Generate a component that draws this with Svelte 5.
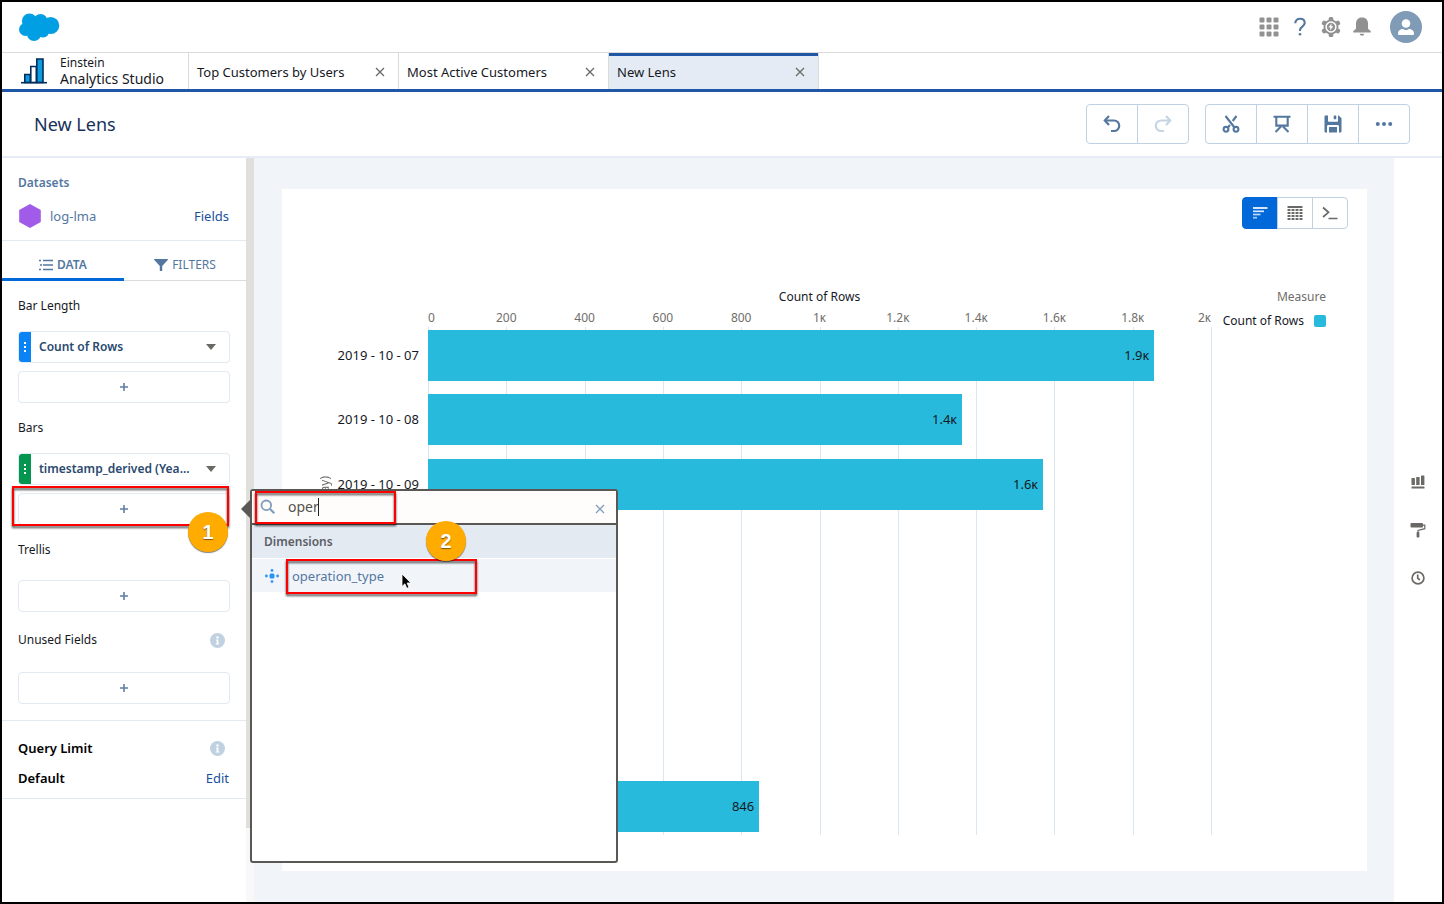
<script>
  let query = $state('oper');

  const tabs = [
    { title: 'Top Customers by Users' },
    { title: 'Most Active Customers' },
    { title: 'New Lens', active: true }
  ];

  const axisMax = 2000;
  const ticks = ['0', '200', '400', '600', '800', '1ᴋ', '1.2ᴋ', '1.4ᴋ', '1.6ᴋ', '1.8ᴋ', '2ᴋ'];

  const rows = [
    { date: '2019 - 10 - 07', value: 1855, label: '1.9ᴋ' },
    { date: '2019 - 10 - 08', value: 1364, label: '1.4ᴋ' },
    { date: '2019 - 10 - 09', value: 1571, label: '1.6ᴋ' },
    { date: '2019 - 10 - 10', value: 0, label: '' },
    { date: '2019 - 10 - 11', value: 0, label: '' },
    { date: '2019 - 10 - 12', value: 0, label: '' },
    { date: '2019 - 10 - 13', value: 0, label: '' },
    { date: '2019 - 10 - 14', value: 846, label: '846' }
  ];

  const fields = ['operation_type'];
  const matches = $derived(fields.filter((f) => f.includes(query)));

  const pct = (n) => (n / axisMax) * 100;
</script>

{#snippet plus()}
  <svg width="10" height="10" viewBox="0 0 10 10" aria-hidden="true">
    <path d="M5 1v8M1 5h8" stroke="#5f7fa5" stroke-width="1.6" />
  </svg>
{/snippet}

{#snippet cross(color)}
  <svg width="10" height="10" viewBox="0 0 10 10" aria-hidden="true">
    <path d="M1 1l8 8M9 1l-8 8" stroke={color} stroke-width="1.3" />
  </svg>
{/snippet}

{#snippet info()}
  <svg width="15" height="15" viewBox="0 0 15 15" aria-hidden="true">
    <circle cx="7.5" cy="7.5" r="7.5" fill="#c0d1e1" />
    <circle cx="7.5" cy="4.4" r="1.2" fill="#fff" />
    <path d="M6 6.5h2.4v4h.9v1H5.8v-1h.9v-3H6z" fill="#fff" />
  </svg>
{/snippet}

{#snippet pill(text, kind)}
  <button class="pill">
    <span class="grip {kind}"><i></i><i></i><i></i></span>
    <span class="pill-text">{text}</span>
    <svg width="10" height="6" viewBox="0 0 10 6" aria-hidden="true"><path d="M0 0h10L5 6z" fill="#6b6965" /></svg>
  </button>
{/snippet}

<div class="app">
  <header class="topbar">
    <a href="#home" aria-label="Home">
      <svg width="41" height="29" viewBox="0 0 41 29" fill="#009fe3">
        <circle cx="10.5" cy="8" r="7.6" />
        <circle cx="21.5" cy="8" r="7" />
        <circle cx="31.7" cy="12.5" r="8.6" />
        <circle cx="6.5" cy="16.5" r="6.5" />
        <circle cx="15" cy="21" r="7" />
        <circle cx="24" cy="18" r="6.5" />
        <circle cx="16" cy="13" r="8" />
      </svg>
    </a>
    <nav class="utilities">
      <button aria-label="App launcher">
        <svg width="20" height="20" viewBox="0 0 20 20" fill="#919191">
          {#each [0, 7, 14] as y}
            {#each [0, 7, 14] as x}
              <rect x={x + 0.5} y={y + 0.5} width="5" height="5" rx="1" />
            {/each}
          {/each}
        </svg>
      </button>
      <button aria-label="Help">
        <svg width="20" height="20" viewBox="0 0 20 20" fill="none">
          <path d="M5.3 6.200C5.3 3.4 7.3 1.800 10 1.800s4.700 1.600 4.700 4.200c0 3.600-4.700 3.700-4.700 7.200v.7" stroke="#54779f" stroke-width="2.100" />
          <circle cx="10" cy="17.200" r="1.300" fill="#54779f" />
        </svg>
      </button>
      <button aria-label="Setup">
        <svg width="20" height="20" viewBox="0 0 20 20">
          <g fill="#919191">
            <circle cx="10" cy="10" r="7.500" />
            {#each [0, 60, 120] as a}
              <rect x="7.700" y="0" width="4.600" height="20" rx="1.500" transform="rotate({a} 10 10)" />
            {/each}
          </g>
          <circle cx="10" cy="10" r="4.900" fill="none" stroke="#fff" stroke-width="1.500" />
          <path d="M10.600 6.300L7.500 10.500h2L8.900 13.700l3.400-4.400h-2z" fill="#fff" />
        </svg>
      </button>
      <button aria-label="Notifications">
        <svg width="20" height="20" viewBox="0 0 20 20" fill="#919191">
          <path d="M10 .5c-4 0-6 2.700-6 6v4.800c0 1.300-2.900 2-2.900 3.400 0 .6.400.9.900.9h16c.5 0 .9-.3.900-.9 0-1.400-2.900-2.100-2.900-3.400V6.500c0-3.300-2-6-6-6z" />
          <path d="M7.800 16.800h4.400c0 1.200-1 2-2.200 2s-2.200-.8-2.200-2z" />
        </svg>
      </button>
      <button class="avatar" aria-label="Profile">
        <svg width="32" height="32" viewBox="0 0 32 32">
          <circle cx="16" cy="16" r="16" fill="#7f9bb6" />
          <circle cx="16" cy="12.500" r="4.300" fill="#fff" />
          <path d="M8 22.500c0-3 2.400-4.500 5-4.500 1.700 1.500 4.300 1.500 6 0 2.600 0 5 1.500 5 4.500 0 1-.6 1.500-1.500 1.500h-13c-.9 0-1.500-.5-1.500-1.500z" fill="#fff" />
        </svg>
      </button>
    </nav>
  </header>

  <div class="tabbar">
    <div class="brand">
      <svg width="26" height="26" viewBox="0 0 26 26" stroke="#032d60" stroke-width="1.600">
        <path d="M3.800 24.500v-8h5.500v8z" fill="#0d9dda" />
        <path d="M9.800 24.500V8.500h5.500v16z" fill="#fff" />
        <path d="M15.800 24.500V1h6.200v23.500z" fill="#0d9dda" />
        <path d="M0 24.700h26" />
      </svg>
      <div class="brand-name">
        <span>Einstein</span>
        <strong>Analytics Studio</strong>
      </div>
    </div>
    {#each tabs as tab}
      <div class="tab" class:active={tab.active}>
        <a href="#tab">{tab.title}</a>
        <button aria-label="Close {tab.title}">{@render cross('#6b6965')}</button>
      </div>
    {/each}
  </div>

  <div class="toolbar">
    <h1>New Lens</h1>
    <div class="group">
      <button aria-label="Undo">
        <svg width="18" height="18" viewBox="0 0 18 18" fill="none" stroke="#54779f" stroke-width="2.200">
          <path d="M2 5.500h9a5.200 5.200 0 0 1 0 10.500H8" />
          <path d="M6 1L1.800 5.500 6 10" />
        </svg>
      </button>
      <button aria-label="Redo" disabled>
        <svg width="18" height="18" viewBox="0 0 18 18" fill="none" stroke="#c5d5e4" stroke-width="2.200">
          <path d="M16 5.500H7A5.200 5.200 0 0 0 7 16h3" />
          <path d="M12 1l4.200 4.500L12 10" />
        </svg>
      </button>
    </div>
    <div class="group">
      <button aria-label="Clip">
        <svg width="18" height="18" viewBox="0 0 18 18" fill="none" stroke="#54779f" stroke-width="2.100">
          <path d="M3.500 1l9 11.500M14.500 1l-3.800 5M8 10l-2.500 3" />
          <circle cx="4" cy="14.300" r="2.400" />
          <circle cx="14" cy="14.300" r="2.400" />
        </svg>
      </button>
      <button aria-label="Present">
        <svg width="18" height="18" viewBox="0 0 18 18" fill="none" stroke="#54779f" stroke-width="2.100">
          <path d="M.5 1.700h17M3.300 2v8.600h11.400V2M8 11.500L2.500 17M10 11.500l5.500 5.500" />
        </svg>
      </button>
      <button aria-label="Save">
        <svg width="18" height="18" viewBox="0 0 18 18" fill="#54779f">
          <path d="M1.500.5H4v5.300c0 .6.400 1 1 1h8c.6 0 1-.4 1-1V.5h.8l2.700 2.700v13c0 .7-.5 1.300-1.300 1.300H15v-6c0-.9-.6-1.500-1.500-1.500h-9C3.600 10 3 10.600 3 11.500v6H1.800C1 17.500.5 17 .5 16.200V1.500c0-.6.400-1 1-1z" />
          <rect x="9.700" y=".5" width="2.600" height="3.800" rx=".6" />
          <path d="M5 12h8v5.500H5z" />
        </svg>
      </button>
      <button aria-label="More">
        <svg width="18" height="18" viewBox="0 0 18 18" fill="#54779f">
          <circle cx="2.800" cy="9" r="2" />
          <circle cx="9" cy="9" r="2" />
          <circle cx="15.200" cy="9" r="2" />
        </svg>
      </button>
    </div>
  </div>

  <div class="body">
    <aside class="sidebar">
      <section class="datasets">
        <h2>Datasets</h2>
        <div class="line">
          <svg width="24" height="24" viewBox="0 0 24 24" aria-hidden="true">
            <path d="M12 0l10.800 6v12L12 24 1.200 18V6z" fill="#a05ce8" />
          </svg>
          <span class="dataset">log-lma</span>
          <a href="#fields">Fields</a>
        </div>
      </section>

      <nav class="modes">
        <button class="on">
          <svg width="14" height="12" viewBox="0 0 14 12" stroke="#54779f" stroke-width="1.500" aria-hidden="true">
            <path d="M4 1.500h10M4 6h10M4 10.500h10M0 1.500h2M1 6h2M0 10.500h2" />
          </svg>
          DATA
        </button>
        <button>
          <svg width="14" height="12" viewBox="0 0 14 12" fill="#54779f" aria-hidden="true">
            <path d="M.5 0h13c.5 0 .5.600.2 1L8.200 7v5H5.800V7L.3 1C0 .6 0 0 .5 0z" />
          </svg>
          FILTERS
        </button>
      </nav>

      <div class="builder">
        <section>
          <h3>Bar Length</h3>
          {@render pill('Count of Rows', 'measure')}
          <button class="add" aria-label="Add bar length">{@render plus()}</button>
        </section>

        <section>
          <h3>Bars</h3>
          {@render pill('timestamp_derived (Yea...', 'dimension')}
          <div class="anchor">
            <button class="add" aria-label="Add bars grouping">{@render plus()}</button>
            <div class="callout callout-add"></div>
            <span class="step step-one">1</span>

            <div class="popover">
              <div class="search">
                <svg width="16" height="16" viewBox="0 0 16 16" fill="none" stroke="#7f9bbd" aria-hidden="true">
                  <circle cx="6.300" cy="6.300" r="4.800" stroke-width="1.800" />
                  <path d="M9.800 9.800l4.500 4.500" stroke-width="2.200" />
                </svg>
                <div class="entry">
                  <input type="text" aria-label="Search fields" bind:value={query} />
                  <span class="caret"></span>
                </div>
                <button class="clear" aria-label="Clear search" onclick={() => (query = '')}>{@render cross('#7f9bbd')}</button>
                <div class="callout callout-search"></div>
              </div>
              <h4>Dimensions</h4>
              {#each matches as field}
                <button class="field">
                  <svg width="14" height="14" viewBox="0 0 14 14" fill="#2a94f4" aria-hidden="true">
                    <rect x="4.500" y="4.500" width="5" height="5" rx="1.500" />
                    <circle cx="7" cy="1.400" r="1.400" />
                    <circle cx="7" cy="12.600" r="1.400" />
                    <circle cx="1.400" cy="7" r="1.400" />
                    <circle cx="12.600" cy="7" r="1.400" />
                  </svg>
                  {field}
                </button>
              {/each}
              <div class="callout callout-field"></div>
              <span class="step step-two">2</span>
              <svg class="pointer" width="11" height="17" viewBox="0 0 11 17" aria-hidden="true">
                <path d="M1 1v12.500l2.900-2.700 1.900 4.500 2.200-.9-1.900-4.400h3.800z" fill="#000" stroke="#fff" stroke-width=".8" />
              </svg>
            </div>
          </div>
        </section>

        <section class="roomy">
          <h3>Trellis</h3>
          <button class="add" aria-label="Add trellis">{@render plus()}</button>
        </section>

        <section class="roomy">
          <h3>Unused Fields {@render info()}</h3>
          <button class="add" aria-label="Add unused field">{@render plus()}</button>
        </section>
      </div>

      <section class="limit">
        <div class="line"><strong>Query Limit</strong>{@render info()}</div>
        <div class="line"><strong>Default</strong><a href="#edit">Edit</a></div>
      </section>
    </aside>

    <div class="scrollbar"><div class="thumb"></div></div>

    <main>
      <div class="card">
        <div class="views">
          <button class="on" aria-label="Chart">
            <svg width="16" height="14" viewBox="0 0 16 14" stroke="#fff" stroke-width="1.700">
              <path d="M1 2h14.500" />
              <path d="M1 5.300h11" opacity=".85" />
              <path d="M1 8.500h7.500" opacity=".75" />
              <path d="M1 11.700h4" opacity=".65" />
            </svg>
          </button>
          <button aria-label="Table">
            <svg width="16" height="16" viewBox="0 0 16 16" fill="#6b6965">
              <rect x=".5" y="1" width="15" height="2" rx=".5" />
              {#each [4, 7, 10, 13] as y}
                {#each [0.5, 4.5, 8.5, 12.5] as x}
                  <rect {x} {y} width="3" height="2" rx=".5" />
                {/each}
              {/each}
            </svg>
          </button>
          <button aria-label="Query">
            <svg width="16" height="14" viewBox="0 0 16 14" fill="none" stroke="#6b6965" stroke-width="1.700">
              <path d="M1 1.500l5.500 4.800L1 11M6.500 12.500h9" />
            </svg>
          </button>
        </div>

        <div class="chart">
          <div class="axis-title">Count of Rows</div>
          <div class="ticks">
            {#each ticks as tick, i}
              <span class:first={i === 0} class:last={i === ticks.length - 1} style="left: {i * 10}%">{tick}</span>
            {/each}
          </div>
          <div class="side">
            <span class="group-title">timestamp_derived (Year-Month-Day)</span>
            <div class="dates">
              {#each rows as row}
                <span>{row.date}</span>
              {/each}
            </div>
          </div>
          <div class="plot">
            {#each ticks as _, i}
              <div class="gridline" style="left: {i * 10}%"></div>
            {/each}
            {#each rows as row}
              <div class="bar" style="width: {pct(row.value)}%">{row.label}</div>
            {/each}
          </div>
          <div class="legend">
            <span>Measure</span>
            <div class="legend-row">Count of Rows <i></i></div>
          </div>
        </div>
      </div>
    </main>

    <nav class="rail">
      <button aria-label="Chart types">
        <svg width="14" height="14" viewBox="0 0 14 14" fill="#6b6965">
          <rect x=".5" y="3" width="3.400" height="7" rx=".6" />
          <rect x="5.200" y="2" width="3.400" height="8" rx=".6" />
          <rect x="10" y=".5" width="3.400" height="9.500" rx=".6" />
          <rect x=".5" y="11.500" width="13" height="2" rx=".6" />
        </svg>
      </button>
      <button aria-label="Formatting">
        <svg width="16" height="16" viewBox="0 0 16 16" fill="#6b6965">
          <rect x=".5" y="1" width="12.500" height="4.500" rx="1" />
          <path d="M13 3.200h1.800v3.500L8 8.500v2" fill="none" stroke="#6b6965" stroke-width="1.200" />
          <rect x="6.600" y="10" width="2.800" height="5.500" rx=".8" />
        </svg>
      </button>
      <button aria-label="History">
        <svg width="14" height="14" viewBox="0 0 14 14" fill="none" stroke="#6b6965" stroke-width="1.700">
          <circle cx="7" cy="7" r="5.900" />
          <path d="M6.700 3.500v3.700L8.800 9" />
        </svg>
      </button>
    </nav>
  </div>
</div>

<style>
  :global(body) {
    margin: 0;
    background: #fff;
  }
  .app {
    display: flex;
    flex-direction: column;
    min-height: 100vh;
    box-sizing: border-box;
    border: 2px solid #000;
    font-family: "Noto Sans", sans-serif;
    font-size: 13px;
    line-height: 20px;
    color: #16191f;
  }
  button {
    display: flex;
    align-items: center;
    justify-content: center;
    padding: 0;
    border: 0;
    background: none;
    font: inherit;
    color: inherit;
    cursor: pointer;
  }
  a {
    color: #1b4f9c;
    text-decoration: none;
  }
  h1, h2, h3, h4 {
    margin: 0;
    font-size: 12px;
    font-weight: 400;
  }
  svg {
    flex-shrink: 0;
    display: block;
  }

  .topbar {
    display: flex;
    align-items: center;
    justify-content: space-between;
    height: 50px;
    padding: 0 20px 0 17px;
    border-bottom: 1px solid #dddbda;
  }
  .utilities {
    display: flex;
    align-items: center;
    gap: 11px;
  }
  .avatar {
    margin-left: 7px;
  }

  .tabbar {
    display: flex;
    height: 36px;
    border-bottom: 3px solid #1f57a6;
  }
  .brand {
    display: flex;
    align-items: center;
    gap: 13px;
    width: 186px;
    box-sizing: border-box;
    padding-left: 19px;
  }
  .brand-name {
    display: flex;
    flex-direction: column;
    font-size: 12px;
    line-height: 16px;
  }
  .brand-name strong {
    font-size: 14px;
    font-weight: 400;
  }
  .tab {
    display: flex;
    align-items: center;
    justify-content: space-between;
    width: 210px;
    box-sizing: border-box;
    padding: 2px 13px 0 8px;
    border-left: 1px solid #dddbda;
  }
  .tab a {
    color: #16191f;
  }
  .tab.active {
    width: 211px;
    border-right: 1px solid #dddbda;
    background: #e4ebf4;
    box-shadow: inset 0 3px #1f57a6;
  }

  .toolbar {
    display: flex;
    align-items: center;
    gap: 16px;
    height: 64px;
    padding: 0 32px;
    border-bottom: 2px solid #e6ecf5;
  }
  .toolbar h1 {
    flex: 1;
    font-size: 18px;
    color: #16325c;
  }
  .group, .views {
    display: flex;
  }
  .group button, .views button {
    box-sizing: border-box;
    width: 52px;
    height: 40px;
    margin-left: -1px;
    border: 1px solid #c0d1e1;
  }
  .group button:first-child, .views button:first-child {
    margin-left: 0;
    border-radius: 4px 0 0 4px;
  }
  .group button:last-child, .views button:last-child {
    border-radius: 0 4px 4px 0;
  }

  .body {
    flex: 1;
    display: flex;
  }
  .sidebar {
    width: 244px;
    flex-shrink: 0;
  }
  .line {
    display: flex;
    align-items: center;
    justify-content: space-between;
  }
  .datasets {
    padding: 15px 17px 12px 16px;
    border-bottom: 1px solid #e1e9f3;
  }
  .datasets h2 {
    margin-bottom: 11px;
    font-weight: 600;
    color: #54779f;
  }
  .datasets .line {
    height: 24px;
  }
  .dataset {
    flex: 1;
    padding-left: 8px;
    color: #54779f;
  }

  .modes {
    display: flex;
    height: 40px;
    color: #54779f;
    font-size: 12px;
  }
  .modes button {
    flex: 1;
    gap: 4px;
    padding-top: 8px;
    box-shadow: inset 0 -1px #dddbda;
  }
  .modes .on {
    font-weight: 600;
    box-shadow: inset 0 -3px #0068d9;
  }

  .builder {
    padding: 15px 16px 16px;
    border-bottom: 1px solid #e1e9f3;
  }
  .builder section + section {
    margin-top: 15px;
  }
  .builder h3 {
    display: flex;
    align-items: center;
    justify-content: space-between;
    margin-bottom: 15px;
    padding-right: 5px;
  }
  .builder .roomy h3 {
    margin-bottom: 20px;
  }
  .builder .roomy + .roomy {
    margin-top: 18px;
  }
  .builder .roomy + .roomy h3 {
    margin-bottom: 22px;
  }
  .pill, .add {
    width: 100%;
    height: 32px;
    box-sizing: border-box;
    border: 1px solid #e1e9f3;
    border-radius: 4px;
    background: #fff;
  }
  .pill {
    margin-bottom: 8px;
    padding-right: 13px;
  }
  .grip {
    display: flex;
    flex-direction: column;
    align-items: center;
    justify-content: center;
    gap: 2px;
    width: 12px;
    height: 100%;
    border-radius: 3px 0 0 3px;
  }
  .grip i {
    width: 2px;
    height: 2px;
    background: #fff;
  }
  .measure {
    background: #0a84f4;
  }
  .dimension {
    background: #04954f;
  }
  .pill-text {
    flex: 1;
    padding-left: 8px;
    font-size: 12px;
    font-weight: 600;
    text-align: left;
    white-space: nowrap;
    color: #29496f;
  }
  .limit {
    padding: 17px 17px 10px 16px;
    border-bottom: 1px solid #e1e9f3;
  }
  .limit strong {
    font-weight: 600;
    color: #000;
  }
  .limit .line:first-child {
    margin-bottom: 10px;
    padding-right: 4px;
  }

  .anchor {
    position: relative;
  }
  .callout {
    position: absolute;
    box-sizing: border-box;
    border: 2px solid #f00;
    filter: drop-shadow(0 2px 1px rgba(0, 0, 0, 0.7));
    pointer-events: none;
  }
  .callout-add {
    top: -7px;
    left: -6px;
    width: 217px;
    height: 40px;
  }
  .callout-search {
    top: 0;
    left: 3px;
    width: 141px;
    height: 33px;
  }
  .callout-field {
    top: 68px;
    left: 34px;
    width: 191px;
    height: 35px;
  }
  .step {
    position: absolute;
    z-index: 1;
    width: 40px;
    height: 40px;
    border-radius: 50%;
    background: #ffab00;
    box-shadow: 0 1px 1px rgba(0, 0, 0, 0.5);
    font: bold 20px/40px "Liberation Sans", sans-serif;
    text-align: center;
    color: #fff;
    text-shadow: 0 1px 1px rgba(0, 0, 0, 0.5);
  }
  .step-one {
    top: 19px;
    left: 170px;
  }
  .step-two {
    top: 30px;
    left: 174px;
  }

  .popover {
    position: absolute;
    z-index: 2;
    top: -4px;
    left: 232px;
    width: 368px;
    height: 374px;
    box-sizing: border-box;
    border: 2px solid #5a5854;
    border-radius: 3px;
    background: #fff;
  }
  .popover::before {
    content: "";
    position: absolute;
    top: 9px;
    left: -11px;
    border: solid transparent;
    border-width: 9px 9px 9px 0;
    border-right-color: #5a5854;
  }
  .search {
    position: relative;
    display: flex;
    align-items: center;
    height: 32px;
    padding: 0 11px 0 8px;
    border-bottom: 2px solid #5a5854;
    background: #fffdfb;
  }
  .entry {
    position: relative;
    flex: 1;
    display: flex;
  }
  .entry input {
    width: 100%;
    padding: 0 0 0 12px;
    border: 0;
    outline: 0;
    background: none;
    font: 14px/20px "Noto Sans", sans-serif;
    color: #54524f;
  }
  .caret {
    position: absolute;
    top: 1px;
    left: 42px;
    width: 1px;
    height: 18px;
    background: #222;
  }
  .clear {
    padding-top: 4px;
  }
  .popover h4 {
    padding: 7px 12px 6px;
    border-bottom: 1px solid #fff;
    font-weight: 600;
    color: #5b5f66;
    background: #e4eaf2;
  }
  .field {
    justify-content: flex-start;
    gap: 13px;
    width: 100%;
    height: 33px;
    padding-left: 13px;
    background: #f1f5fa;
    color: #54779f;
  }
  .pointer {
    position: absolute;
    top: 82px;
    left: 149px;
  }

  .scrollbar {
    width: 8px;
    background: #f8f8f8;
  }
  .thumb {
    height: 90%;
    background: #e0dfdb;
  }

  main {
    flex: 1;
    display: flex;
    padding: 31px 27px 31px 28px;
    background: #f1f5fa;
  }
  .card {
    flex: 1;
    display: flex;
    flex-direction: column;
    background: #fff;
  }
  .views {
    justify-content: flex-end;
    padding: 8px 19px 0 0;
  }
  .views button {
    width: 36px;
    height: 32px;
  }
  .views .on {
    border-color: #0068d9;
    background: #0068d9;
  }
  .chart {
    flex: 1;
    display: grid;
    grid-template-columns: 146px 1fr 115px;
    grid-template-rows: 16px 21px 1fr;
    padding: 60px 41px 35px 0;
    line-height: 16px;
  }
  .axis-title {
    grid-column: 2;
    font-size: 12px;
    text-align: center;
  }
  .ticks {
    grid-column: 2;
    grid-row: 2;
    position: relative;
    font-size: 12px;
    color: #706e6b;
  }
  .ticks span {
    position: absolute;
    top: 5px;
    transform: translateX(-50%);
  }
  .ticks .first {
    transform: none;
  }
  .ticks .last {
    transform: translateX(-100%);
  }
  .side {
    grid-column: 1;
    grid-row: 3;
    display: flex;
    align-items: center;
    justify-content: space-between;
    padding: 0 9px 0 35px;
  }
  .group-title {
    writing-mode: vertical-rl;
    transform: rotate(180deg);
    font-size: 12px;
    white-space: nowrap;
    color: #706e6b;
  }
  .dates, .plot {
    display: flex;
    flex-direction: column;
    justify-content: space-between;
    height: 100%;
    box-sizing: border-box;
    padding: 4px 0;
  }
  .dates span {
    line-height: 51px;
    white-space: nowrap;
  }
  .plot {
    grid-column: 2;
    grid-row: 3;
    position: relative;
  }
  .gridline {
    position: absolute;
    top: 1px;
    bottom: 1px;
    width: 1px;
    background: #dce6ee;
  }
  .bar {
    position: relative;
    height: 51px;
    box-sizing: border-box;
    background: #28badc;
    line-height: 51px;
    text-align: right;
  }
  .bar:not(:empty) {
    padding-right: 5px;
  }
  .legend {
    grid-column: 3;
    grid-row: 1 / 4;
    display: flex;
    flex-direction: column;
    align-items: flex-end;
    gap: 8px;
    font-size: 12px;
    color: #706e6b;
  }
  .legend-row {
    display: flex;
    align-items: center;
    gap: 10px;
    white-space: nowrap;
    color: #16191f;
  }
  .legend-row i {
    width: 12px;
    height: 12px;
    border-radius: 2px;
    background: #28badc;
  }

  .rail {
    display: flex;
    flex-direction: column;
    align-items: center;
    justify-content: center;
    gap: 32px;
    width: 48px;
  }
  .rail button {
    width: 16px;
    height: 16px;
  }
</style>
